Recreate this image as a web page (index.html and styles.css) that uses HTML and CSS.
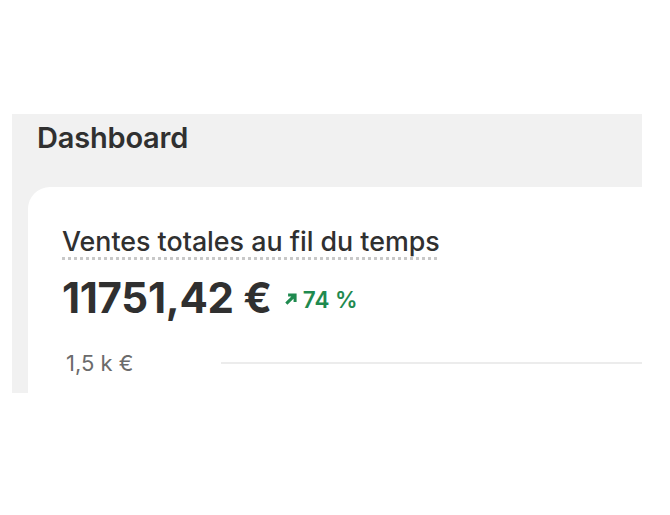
FILE: index.html
```html
<!DOCTYPE html>
<html lang="fr">
<head>
<meta charset="utf-8">
<link rel="stylesheet" href="styles.css">
</head>
<body>
<div class="panel">
  <h1 class="page-title">Dashboard</h1>
  <div class="card">
    <h2 class="card-title"><span class="dotted">Ventes totales au fil du temps</span></h2>
    <div class="metric">
      <span class="value">11751,42 €</span>
      <span class="delta">
        <svg class="arrow" viewBox="0 0 12 12" width="14" height="14"><path d="M2 10 L8.5 3.5 M3.5 2.5 H9.5 V8.5" fill="none" stroke="currentColor" stroke-width="2.6" stroke-linecap="butt"/></svg>
        74 %
      </span>
    </div>
    <div class="axis-row">
      <span class="axis-label">1,5 k €</span>
      <span class="grid-line"></span>
    </div>
  </div>
</div>
</body>
</html>
```
FILE: styles.css
```css
html, body {
  margin: 0;
  padding: 0;
  background: #ffffff;
}
body {
  width: 670px;
  height: 515px;
  font-family: Inter, "Noto Sans", sans-serif;
  color: #303030;
  padding-top: 114px;
  padding-left: 12px;
  box-sizing: border-box;
}
.panel {
  width: 630px;
  height: 279px;
  background: #f1f1f1;
  overflow: hidden;
  box-sizing: border-box;
  padding: 0 0 0 16px;
}
.page-title {
  margin: 0;
  padding: 6px 0 0 9px;
  height: 73px;
  box-sizing: border-box;
  font-size: 29px;
  font-weight: 600;
  letter-spacing: -0.2px;
  line-height: 36px;
  color: #303030;
}
.card {
  background: #ffffff;
  border-top-left-radius: 22px;
  margin-right: -40px;
  padding: 38px 0 0 34px;
  height: 300px;
  box-sizing: border-box;
}
.card-title {
  margin: 0;
  font-size: 26.8px;
  font-weight: 500;
  color: #303030;
  line-height: 32px;
}
.dotted {
  display: inline-block;
  padding-bottom: 3px;
  background-image: linear-gradient(to right, #c8c8c8 50%, transparent 50%);
  background-size: 6px 3px;
  background-repeat: repeat-x;
  background-position: 0 100%;
}
.metric {
  display: flex;
  align-items: center;
  gap: 12px;
  margin-top: 13px;
}
.value {
  font-size: 42px;
  font-weight: 700;
  color: #303030;
  letter-spacing: -0.3px;
  line-height: 50px;
}
.delta {
  display: inline-flex;
  align-items: center;
  gap: 5px;
  color: #1f8a4f;
  font-size: 22.5px;
  font-weight: 600;
  padding-top: 2px;
}
.arrow {
  width: 14px;
  height: 14px;
}
.axis-row {
  display: flex;
  align-items: center;
  margin-top: 27px;
  padding-left: 4px;
}
.axis-label {
  font-size: 22px;
  color: #6b6b6b;
  width: 155px;
}
.grid-line {
  flex: 1;
  height: 2px;
  background: #ececec;
}
```
